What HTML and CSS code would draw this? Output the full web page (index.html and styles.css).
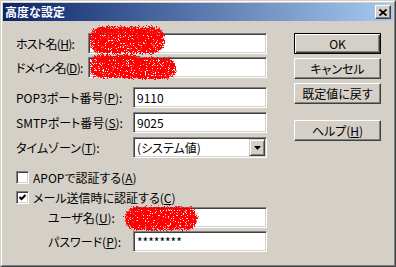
FILE: index.html
```html
<!DOCTYPE html>
<html lang="ja">

<head>
    <meta charset="UTF-8">
    <title>高度な設定</title>
    <link rel="stylesheet" href="styles.css">
</head>

<body>
    <div class="window">
        <div class="frame">
            <div class="titlebar">
                <span class="title">高度な設定</span>
                <div class="close">
                    <svg width="8" height="7" viewBox="0 0 8 7">
                        <path d="M0.5 0.5 L7.5 6.5 M7.5 0.5 L0.5 6.5" stroke="#000" stroke-width="1.8" fill="none"/>
                    </svg>
                </div>
            </div>

            <div class="content">
                <div class="form">
                    <div class="row host">
                        <span class="label lbl_short">ホスト名(<u>H</u>):</span>
                        <div class="edit edit_long"></div>
                    </div>
                    <div class="row domain">
                        <span class="label lbl_short">ドメイン名(<u>D</u>):</span>
                        <div class="edit edit_long"></div>
                    </div>
                    <div class="row pop">
                        <span class="label lbl_wide">POP3ポート番号(<u>P</u>):</span>
                        <div class="edit">9110</div>
                    </div>
                    <div class="row smtp">
                        <span class="label lbl_wide">SMTPポート番号(<u>S</u>):</span>
                        <div class="edit">9025</div>
                    </div>
                    <div class="row tz">
                        <span class="label lbl_wide">タイムゾーン(<u>T</u>):</span>
                        <div class="combo">
                            <span class="combo_text">(システム値)</span>
                            <div class="drop">
                                <svg width="7" height="4" viewBox="0 0 7 4"><polygon points="0,0 7,0 3.5,4" fill="#000"/></svg>
                            </div>
                        </div>
                    </div>
                    <div class="check_row apop">
                        <div class="checkbox"></div>
                        <span>APOPで認証する(<u>A</u>)</span>
                    </div>
                    <div class="check_row smtp_auth">
                        <div class="checkbox">
                            <svg width="7" height="7" viewBox="0 0 7 7"><path d="M0.5 3 L2.5 5 L6.5 1" stroke="#000" stroke-width="2" fill="none"/></svg>
                        </div>
                        <span>メール送信時に認証する(<u>C</u>)</span>
                    </div>
                    <div class="row user">
                        <span class="label lbl_sub">ユーザ名(<u>U</u>):</span>
                        <div class="edit"></div>
                    </div>
                    <div class="row pass">
                        <span class="label lbl_sub">パスワード(<u>P</u>):</span>
                        <div class="edit">********</div>
                    </div>
                </div>

                <div class="buttons">
                    <div class="btn btn_default">OK</div>
                    <div class="btn cancel">キャンセル</div>
                    <div class="btn reset">既定値に戻す</div>
                    <div class="btn help">ヘルプ(<u>H</u>)</div>
                </div>
            </div>
        </div>

        <!-- redaction marks drawn over the private fields -->
        <svg class="scribble" width="396" height="267" viewBox="0 0 396 267">
            <defs>
                <filter id="spray" x="-15%" y="-30%" width="130%" height="160%">
                    <feTurbulence type="fractalNoise" baseFrequency="0.9" numOctaves="2" seed="3" result="noise"/>
                    <feDisplacementMap in="SourceGraphic" in2="noise" scale="8" xChannelSelector="R" yChannelSelector="G" result="rough"/>
                    <feTurbulence type="fractalNoise" baseFrequency="1.4" numOctaves="1" seed="11" result="grain"/>
                    <feColorMatrix in="grain" type="matrix" values="0 0 0 0 0  0 0 0 0 0  0 0 0 0 0  -14 0 0 0 9.5" result="mask"/>
                    <feComposite in="rough" in2="mask" operator="in"/>
                </filter>
            </defs>
            <g fill="#ff0000" filter="url(#spray)">
                <rect x="90" y="27" width="74" height="26" rx="11"/>
                <rect x="90" y="55" width="54" height="23" rx="10"/>
                <rect x="128" y="58" width="48" height="21" rx="10"/>
                <rect x="125" y="207" width="72" height="23" rx="11"/>
            </g>
        </svg>
    </div>
</body>

</html>
```

FILE: styles.css
```css
* {
    margin: 0;
    padding: 0;
    box-sizing: border-box;
}

body {
    font-family: "Noto Sans CJK JP", "Noto Sans", sans-serif;
    font-size: 12px;
    line-height: 14px;
    font-feature-settings: "palt";
    color: #000;
    background-color: #d4d0c8;
}

u {
    text-decoration-thickness: 1px;
}

.window {
    position: relative;
    width: 396px;
    height: 267px;
    border: 1px solid;
    border-color: #d4d0c8 #404040 #404040 #d4d0c8;
    background-color: #d4d0c8;
}

.frame {
    height: 100%;
    border: 1px solid;
    border-color: #fff #808080 #808080 #fff;
    padding: 1px;
}

.titlebar {
    height: 18px;
    display: flex;
    align-items: center;
    justify-content: space-between;
    padding-left: 2px;
    background: linear-gradient(to right, #0a246a, #a6caf0);
    color: #fff;
    font-weight: bold;
    font-feature-settings: normal;
}

.close {
    width: 16px;
    height: 14px;
    margin-right: 2px;
    display: flex;
    align-items: center;
    justify-content: center;
    background-color: #d4d0c8;
    border: 1px solid;
    border-color: #fff #404040 #404040 #fff;
    box-shadow: inset -1px -1px #808080;
}

.content {
    display: flex;
    padding: 12px 0 0 13px;
}

.form {
    width: 251px;
}

/* form rows */
.row {
    display: flex;
    align-items: center;
    height: 21px;
}

.domain { margin-top: 3px; }
.pop { margin-top: 9px; }
.smtp { margin-top: 4px; }
.tz { margin-top: 4px; }
.apop { margin-top: 11px; }
.smtp_auth { margin-top: 3px; }
.user { margin-top: 1px; }
.pass { margin-top: 3px; }

.label {
    flex-shrink: 0;
    white-space: nowrap;
}

.lbl_short {
    width: 72px;
    letter-spacing: -0.7px;
}

.lbl_wide { width: 117px; }
.lbl_sub {
    width: 85px;
    margin-left: 32px;
}

.edit {
    flex: 1;
    height: 21px;
    padding: 3px 0 0 3px;
    background-color: #fff;
    border: 1px solid;
    border-color: #808080 #fff #fff #808080;
    box-shadow: inset 1px 1px #404040, inset -1px -1px #d4d0c8;
}

.combo {
    flex: 1;
    height: 21px;
    display: flex;
    align-items: center;
    padding: 1px;
    background-color: #fff;
    border: 1px solid;
    border-color: #808080 #fff #fff #808080;
    box-shadow: inset 1px 1px #404040, inset -1px -1px #d4d0c8;
}

.combo_text {
    flex: 1;
    padding-left: 2px;
}

.drop {
    width: 16px;
    height: 17px;
    display: flex;
    align-items: center;
    justify-content: center;
    background-color: #d4d0c8;
    border: 1px solid;
    border-color: #d4d0c8 #404040 #404040 #d4d0c8;
    box-shadow: inset 1px 1px #fff, inset -1px -1px #808080;
}

/* checkboxes */
.check_row {
    display: flex;
    align-items: center;
    height: 17px;
}

.checkbox {
    width: 13px;
    height: 13px;
    margin-right: 4px;
    display: flex;
    align-items: center;
    justify-content: center;
    background-color: #fff;
    border: 1px solid;
    border-color: #808080 #fff #fff #808080;
    box-shadow: inset 1px 1px #404040, inset -1px -1px #d4d0c8;
}

/* right column */
.buttons {
    width: 87px;
    margin-left: 27px;
}

.btn {
    height: 21px;
    display: flex;
    align-items: center;
    justify-content: center;
    border: 1px solid;
    border-color: #fff #404040 #404040 #fff;
    box-shadow: inset -1px -1px #808080;
}

.btn_default {
    border-color: #000;
    box-shadow: inset 1px 1px #fff, inset -1px -1px #404040, inset -2px -2px #808080;
}

.cancel { margin-top: 4px; }
.reset { margin-top: 4px; }
.help { margin-top: 16px; }

.scribble {
    position: absolute;
    top: -1px;
    left: -1px;
    pointer-events: none;
}
```
